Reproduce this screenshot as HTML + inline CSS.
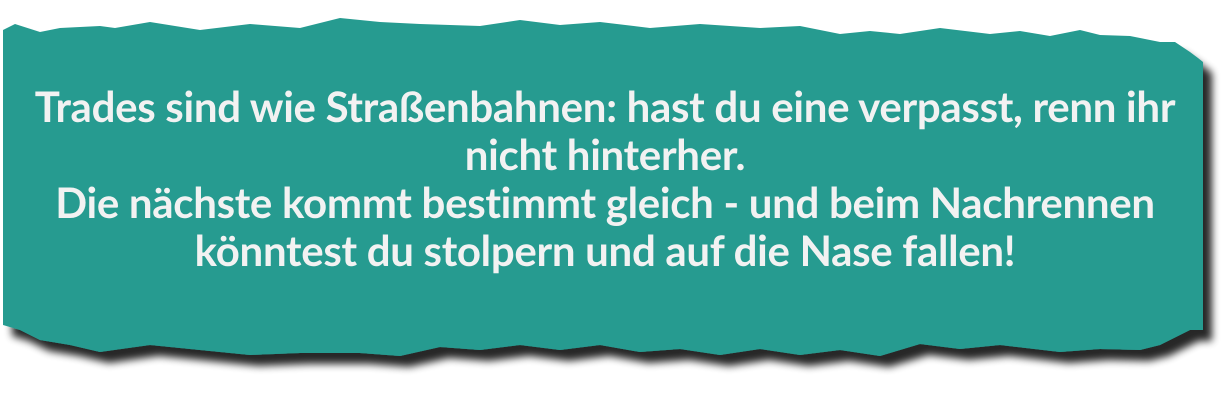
<!DOCTYPE html>
<html><head><meta charset="utf-8"><style>
html,body{margin:0;padding:0;background:#fff;width:1230px;height:400px;overflow:hidden}
svg{position:absolute;left:0;top:0}
.t{position:absolute;left:0;top:82px;width:1210px;text-align:center;color:#f2f2f2;font-family:"Lato","Liberation Sans",sans-serif;font-weight:bold;font-size:42px;line-height:48px;letter-spacing:-0.3px;white-space:nowrap}
</style></head><body>
<svg width="1230" height="400">
<defs><filter id="s" x="-5%" y="-10%" width="115%" height="130%"><feGaussianBlur in="SourceAlpha" stdDeviation="4"/><feOffset dx="9" dy="11"/><feComponentTransfer><feFuncA type="linear" slope="0.85"/></feComponentTransfer><feMerge><feMergeNode/><feMergeNode in="SourceGraphic"/></feMerge></filter></defs>
<path filter="url(#s)" fill="#259b90" d="M3,30 L15,24 L40,32 L60,28 L100,26 L115,28 L150,22 L200,30 L250,24 L300,28 L340,18 L380,22 L420,24 L480,26 L520,20 L560,25 L600,22 L650,28 L700,24 L760,28 L800,26 L840,34 L870,31 L900,34 L940,28 L990,34 L1020,31 L1050,36 L1080,30 L1100,35 L1130,36 L1160,42 L1175,42 L1190,52 L1198,58 L1203,62 L1203,330 L1190,330 L1160,345 L1140,350 L1100,349 L1060,352 L1000,345 L960,349 L920,344 L880,356 L840,350 L800,355 L760,349 L720,355 L680,349 L640,352 L600,345 L560,350 L520,345 L480,350 L440,347 L400,356 L360,353 L300,353 L250,355 L200,350 L150,345 L100,352 L70,345 L40,340 L20,330 L3,325 Z"/>
</svg>
<div class="t">Trades sind wie Straßenbahnen: hast du eine verpasst, renn ihr<br>nicht hinterher.<br>Die nächste kommt bestimmt gleich - und beim Nachrennen<br>könntest du stolpern und auf die Nase fallen!</div>
</body></html>
